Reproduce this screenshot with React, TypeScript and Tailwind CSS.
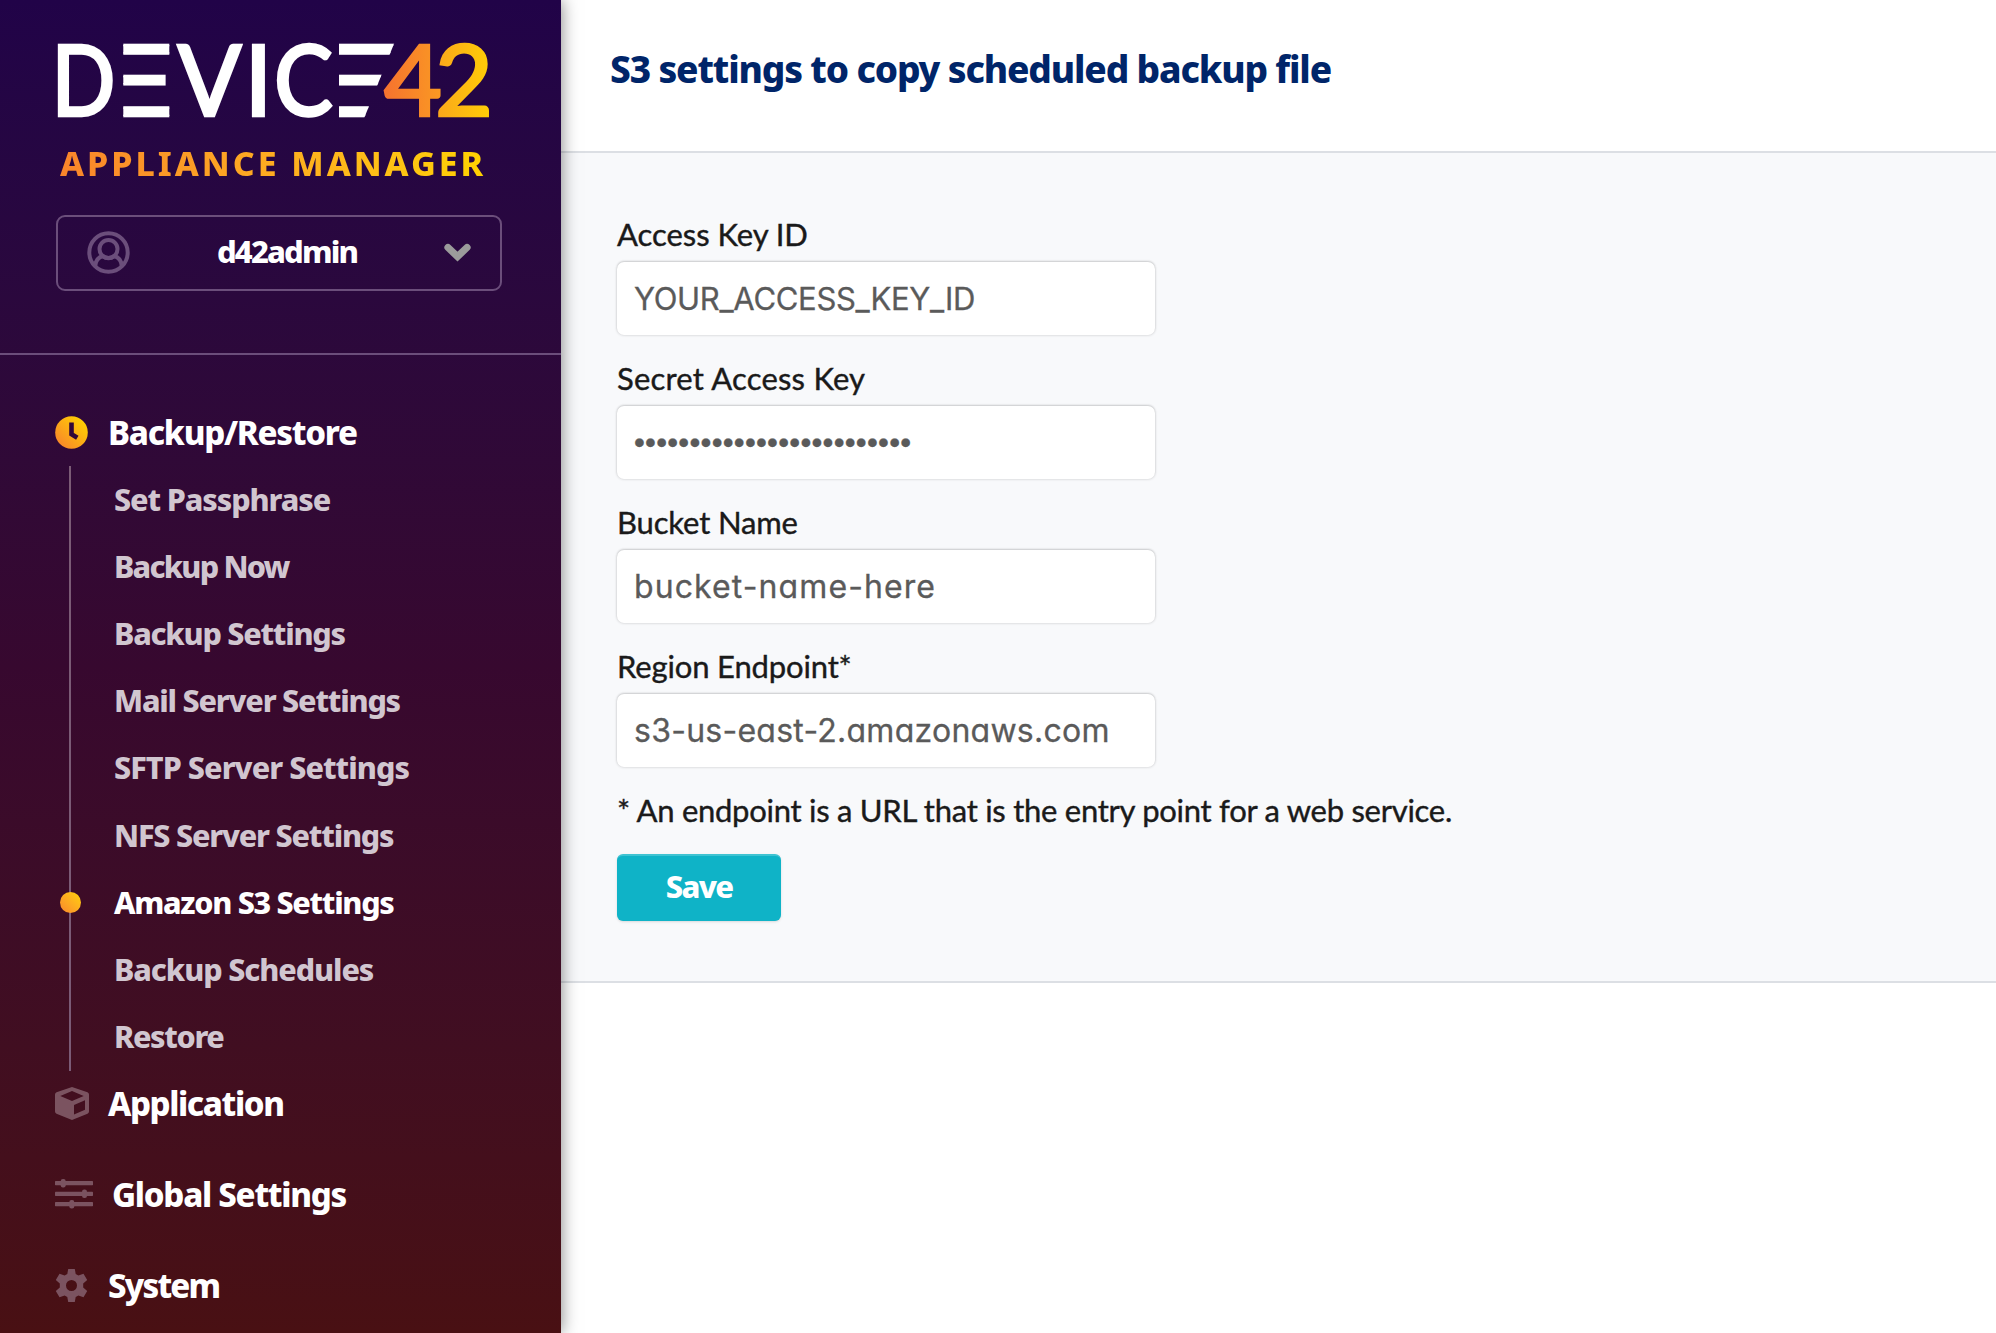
import { useId } from "react";

const INTER = "font-[Inter,sans-serif] [font-feature-settings:'cv11']";

const FORM_FIELDS = [
  { label: "Access Key ID", value: "YOUR_ACCESS_KEY_ID", labelTrack: "tracking-[-0.05px]", font: `${INTER} text-[31px] tracking-[-0.3px]` },
  {
    label: "Secret Access Key",
    value: "•••••••••••••••••••••••••",
    labelTrack: "tracking-[0.2px]",
    font: "font-['Liberation_Sans',sans-serif] text-[31px] tracking-[0.240px]",
  },
  { label: "Bucket Name", value: "bucket-name-here", labelTrack: "tracking-[-0.15px]", font: `${INTER} text-[32px] tracking-[1.1px]` },
  { label: "Region Endpoint*", value: "s3-us-east-2.amazonaws.com", labelTrack: "tracking-[-0.15px]", font: `${INTER} text-[32px] tracking-[0.25px]` },
];

const BACKUP_ITEMS = [
  { label: "Set Passphrase", track: "tracking-[-1.1px]" },
  { label: "Backup Now", track: "tracking-[-1.8px]" },
  { label: "Backup Settings", track: "tracking-[-1.25px]" },
  { label: "Mail Server Settings", track: "tracking-[-1.2px]" },
  { label: "SFTP Server Settings", track: "tracking-[-0.95px]" },
  { label: "NFS Server Settings", track: "tracking-[-1.2px]" },
  { label: "Amazon S3 Settings", track: "tracking-[-1.3px]", active: true },
  { label: "Backup Schedules", track: "tracking-[-1.1px]" },
  { label: "Restore", track: "tracking-[-1.35px]" },
];

function Logo() {
  return (
    <svg width="445" height="86" viewBox="0 0 445 86" className="block" fontFamily="Lato, sans-serif" aria-label="DEVICE42">
      <defs>
        <linearGradient id="logo-four" x1="0" x2="1" y1="0" y2="0">
          <stop offset="0" stopColor="#f6722f" />
          <stop offset="1" stopColor="#fa9a22" />
        </linearGradient>
        <linearGradient id="logo-two" x1="0" x2="1" y1="0" y2="0">
          <stop offset="0" stopColor="#fba51c" />
          <stop offset="1" stopColor="#ffd005" />
        </linearGradient>
        <clipPath id="bars">
          <rect x="67.3" y="0" width="46" height="86" />
        </clipPath>
        <clipPath id="slanted-bars">
          <path d="M283 0H339.500L305 86H283Z" />
        </clipPath>
      </defs>
      <g fill="#fff" stroke="#fff" strokeWidth="2.5" fontSize="98" fontWeight="500">
        <text x="-4.5" y="76.3" textLength="64" lengthAdjust="spacingAndGlyphs">D</text>
        <g clipPath="url(#bars)">
          <text x="33" y="76.3" textLength="92" lengthAdjust="spacingAndGlyphs">E</text>
        </g>
        <text x="121.500" y="76.3" textLength="64" lengthAdjust="spacingAndGlyphs">V</text>
        <text x="188.500" y="76.3">I</text>
        <text x="218" y="76.3" textLength="59" lengthAdjust="spacingAndGlyphs">C</text>
        <g clipPath="url(#slanted-bars)">
          <text x="243" y="76.3" textLength="108" lengthAdjust="spacingAndGlyphs">E</text>
        </g>
      </g>
      <g fontSize="98" fontWeight="500" strokeWidth="2.5">
        <text x="328" y="76.3" textLength="58" lengthAdjust="spacingAndGlyphs" fill="url(#logo-four)" stroke="url(#logo-four)">4</text>
        <text x="379" y="76.3" textLength="58" lengthAdjust="spacingAndGlyphs" fill="url(#logo-two)" stroke="url(#logo-two)">2</text>
      </g>
    </svg>
  );
}

function AvatarIcon() {
  return (
    <svg width="43" height="43" viewBox="0 0 43 43" fill="none" stroke="#6b4e7b" strokeWidth="4">
      <circle cx="21.5" cy="21.5" r="19.2" />
      <circle cx="21.5" cy="18" r="9" />
      <path d="M8.200 35c.4-5 2.400-8.500 7.300-10 4 2.800 8 2.800 12 0 4.900 1.500 6.900 5 7.300 10" />
    </svg>
  );
}

function ChevronIcon() {
  return (
    <svg width="27" height="19" viewBox="0 0 27 19">
      <path d="M4 4.500L13.500 13.500L23 4.500" fill="none" stroke="#9b9b9b" strokeWidth="7.200" strokeLinecap="round" strokeLinejoin="miter" />
    </svg>
  );
}

function ClockIcon() {
  const id = useId();
  return (
    <svg width="33" height="33" viewBox="0 0 33 33">
      <defs>
        <linearGradient id={id} x1="0" y1="1" x2="1" y2="0">
          <stop offset="0.100" stopColor="#f9862b" />
          <stop offset="0.900" stopColor="#ffd200" />
        </linearGradient>
      </defs>
      <circle cx="16.500" cy="16.500" r="16.300" fill={`url(#${id})`} />
      <path d="M16.500 6.500V18.200L22.300 21.800" fill="none" stroke="#310739" strokeWidth="4.600" />
    </svg>
  );
}

function CubeIcon() {
  return (
    <svg width="34" height="33" viewBox="0 0 34 33" fill="#7b5360" fillRule="evenodd">
      <path d="M17 0L32.500 5.300Q34 6 34 7.600V24.500Q34 26 32.500 26.700L17 33L1.500 26.700Q0 26 0 24.500V7.600Q0 6 1.500 5.300ZM17 4L5.300 9L17 14L28.700 9ZM19 18V27.500L30 22.800V13.200Z" />
    </svg>
  );
}

function SlidersIcon() {
  return (
    <svg width="38" height="30" viewBox="0 0 38 30" fill="#7b5360">
      <rect y="2" width="38" height="4.200" rx="0.600" />
      <rect y="12.700" width="38" height="4.200" rx="0.600" />
      <rect y="23" width="38" height="4.200" rx="0.600" />
      <rect x="5.700" y="0" width="5" height="8.500" rx="2.200" />
      <rect x="27" y="10.500" width="5" height="8.500" rx="2.200" />
      <rect x="14.300" y="21" width="5" height="8.500" rx="2.200" />
    </svg>
  );
}

function GearIcon() {
  return (
    <svg width="33" height="33" viewBox="0 0 33 33">
      <path
        fill="#7b5360"
        fillRule="evenodd"
        d="M13.200 0H19.800L20.700 4.900L23.400 6.400L28.500 4.700L32.200 11L28.200 14.600V18.400L32.200 22L28.500 28.300L23.400 26.600L20.700 28.100L19.800 33H13.200L12.300 28.100L9.600 26.600L4.500 28.300L0.800 22L4.800 18.400V14.600L0.800 11L4.500 4.700L9.600 6.400L12.300 4.900ZM16.500 11A5.500 5.500 0 1 0 16.500 22A5.500 5.500 0 1 0 16.500 11Z"
      />
    </svg>
  );
}

function Sidebar() {
  return (
    <aside className="relative z-10 h-full w-[561px] shrink-0 bg-linear-to-b from-[#210348] via-[#37082f] to-[#491013] font-['Noto_Sans',sans-serif] font-extrabold text-white shadow-[0_0_16px_rgba(0,0,0,0.5)]">
      <header className="flex h-[355px] flex-col border-b-2 border-[#6b4e7b] pt-10 pl-14">
        <Logo />
        <p className="mt-[14px] w-fit bg-linear-to-r from-[#f9842b] to-[#ffd200] bg-clip-text pl-1 text-[34px] leading-[46px] tracking-[2.950px] whitespace-nowrap text-transparent">
          APPLIANCE MANAGER
        </p>
        <button className="mt-[29px] flex h-[76px] w-[446px] items-center justify-between rounded-[9px] border-2 border-[#6b4e7b] pr-[29px] pb-0.5 pl-[29px] font-extrabold">
          <AvatarIcon />
          <span className="pb-0.5 text-[31px] leading-10 tracking-[-1.850px]">d42admin</span>
          <ChevronIcon />
        </button>
      </header>
      <nav className="pt-[52px]">
        <div className="flex h-[50px] items-center pl-[55px]">
          <ClockIcon />
          <span className="pt-0.5 pl-5 text-[33px] tracking-[-1.250px]">Backup/Restore</span>
        </div>
        <div className="mt-[10px] ml-[69px] h-[605px] border-l-2 border-[#7b5b76]">
          <ul className="-mt-px flex flex-col">
            {BACKUP_ITEMS.map((item) => (
              <li key={item.label} className="relative flex h-[67.200px] items-center pl-[43px]">
                {item.active && (
                  <span className="absolute left-[-11.500px] size-[21px] rounded-full bg-linear-to-tr from-[#f9862b] to-[#ffd200]" />
                )}
                <span className={`text-[30.500px] whitespace-nowrap ${item.track} ${item.active ? "text-white" : "text-[#d1c6d0]"}`}>
                  {item.label}
                </span>
              </li>
            ))}
          </ul>
        </div>
        <div className="mt-[7px] flex h-[50px] items-center pl-[55px] text-[33px] tracking-[-1.400px]">
          <CubeIcon />
          <span className="pt-0.5 pl-[19px]">Application</span>
        </div>
        <div className="mt-[41px] flex h-[50px] items-center pl-[55px] text-[33px] tracking-[-1.250px]">
          <SlidersIcon />
          <span className="pt-0.5 pl-[19px]">Global Settings</span>
        </div>
        <div className="mt-[41px] flex h-[50px] items-center pl-[55px] text-[33px] tracking-[-1.800px]">
          <GearIcon />
          <span className="pt-0.5 pl-5">System</span>
        </div>
      </nav>
    </aside>
  );
}

export default function App() {
  return (
    <div className="flex h-[1333px] w-[1996px] overflow-hidden bg-white">
      <Sidebar />
      <main className="min-w-0 flex-1">
        <h1 className="h-[151px] pt-[44px] pl-[49px] font-['Noto_Sans',sans-serif] text-[37px] leading-[50px] font-extrabold tracking-[-1.140px] text-[#002569]">
          S3 settings to copy scheduled backup file
        </h1>
        <form className="flex h-[832px] flex-col items-start border-y-2 border-[#dcdfe4] bg-[#f8f9fb] pt-[60px] pl-14 font-[Lato,sans-serif] text-[31px] text-[#1a1a1a]">
          {FORM_FIELDS.map((field) => (
            <div key={field.label} className="h-36">
              <label className={`block h-[49px] leading-[42px] [-webkit-text-stroke:0.4px] ${field.labelTrack}`}>{field.label}</label>
              <input
                readOnly
                value={field.value}
                className={`block h-[73px] w-[538px] rounded-[7px] bg-white px-[17px] text-[#5a5a5a] shadow-[0_0_3px_rgba(0,0,0,0.2),0_-1px_2px_rgba(0,0,0,0.1)] [-webkit-text-stroke:0.3px] ${field.font}`}
              />
            </div>
          ))}
          <p className="h-[65px] leading-[42px] tracking-[-0.270px] whitespace-nowrap [-webkit-text-stroke:0.4px]">
            * An endpoint is a URL that is the entry point for a web service.
          </p>
          <button
            type="button"
            className="h-[67px] w-[164px] rounded-[6px] border-t-2 border-[#3fc3d2] bg-[#0fb3c7] pb-1 font-['Noto_Sans',sans-serif] text-[31px] font-extrabold tracking-[-1.700px] text-white shadow-sm"
          >
            Save
          </button>
        </form>
      </main>
    </div>
  );
}
